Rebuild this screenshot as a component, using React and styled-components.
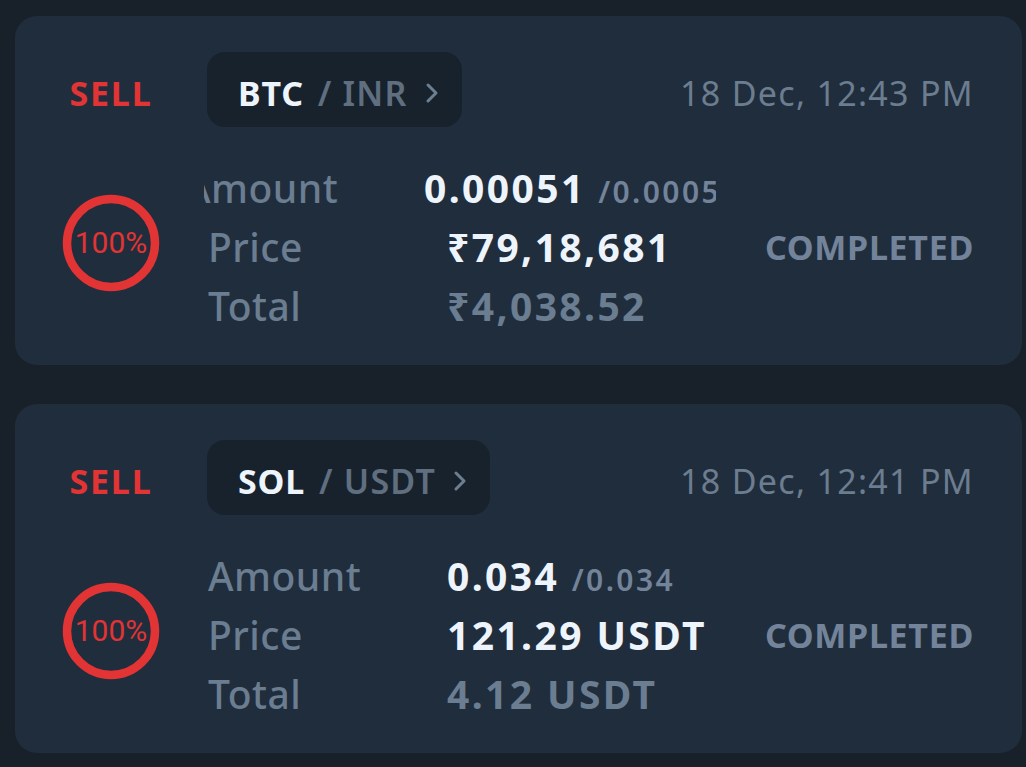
import styled, { createGlobalStyle } from "styled-components";

const GlobalStyle = createGlobalStyle`
  html, body {
    margin: 0;
    padding: 0;
    background: #18202a;
  }
  body {
    font-family: "Noto Sans", "Open Sans", sans-serif;
    overflow: hidden;
  }
`;

const orders = [
  {
    side: "SELL",
    base: "BTC",
    quote: "INR",
    time: "18 Dec, 12:43 PM",
    amount: "0.00051",
    filled: "/0.0005",
    price: "₹79,18,681",
    total: "₹4,038.52",
    status: "COMPLETED",
    shift: 23,
  },
  {
    side: "SELL",
    base: "SOL",
    quote: "USDT",
    time: "18 Dec, 12:41 PM",
    amount: "0.034",
    filled: "/0.034",
    price: "121.29 USDT",
    total: "4.12 USDT",
    status: "COMPLETED",
    shift: 0,
  },
];

const Ring = () => (
  <RingBox>
    <svg width="98" height="98" viewBox="0 0 98 98">
      <circle cx="49" cy="49" r="44" fill="none" stroke="#e23434" strokeWidth="8.5" />
    </svg>
    <RingText>100%</RingText>
  </RingBox>
);

const Chevron = () => (
  <svg width="16" height="22" viewBox="0 0 16 22">
    <path d="M4 3 L12 11 L4 19" fill="none" stroke="#6e7f91" strokeWidth="3" strokeLinecap="round" strokeLinejoin="round" />
  </svg>
);

const OrderCard = ({ order }) => (
  <Card>
    <Side>{order.side}</Side>
    <Header>
      <Pair>
        <Base>{order.base}</Base>
        <Quote>/ {order.quote}</Quote>
        <Chevron />
      </Pair>
      <Time>{order.time}</Time>
    </Header>
    <RingCell>
      <Ring />
    </RingCell>
    <Body>
      <Rows>
        <ClipRow>
          <Row style={{ marginLeft: -order.shift }}>
            <Label>Amount</Label>
            <Value>
              {order.amount} <Filled>{order.filled}</Filled>
            </Value>
          </Row>
        </ClipRow>
        <Row>
          <Label>Price</Label>
          <Value>{order.price}</Value>
        </Row>
        <Row>
          <Label>Total</Label>
          <Value $muted>{order.total}</Value>
        </Row>
      </Rows>
      <Status>{order.status}</Status>
    </Body>
  </Card>
);

const App = () => (
  <>
    <GlobalStyle />
    <Page>
      {orders.map((o, i) => (
        <OrderCard key={i} order={o} />
      ))}
    </Page>
  </>
);

export default App;

const Page = styled.div`
  padding: 16px 4px 0 15px;
  display: flex;
  flex-direction: column;
  gap: 39px;
`;

const Card = styled.div`
  background: #202d3d;
  border-radius: 22px;
  height: 349px;
  box-sizing: border-box;
  padding: 36px 48px 30px 0;
  display: grid;
  grid-template-columns: 192px 1fr;
  grid-template-rows: 75px 177px;
  row-gap: 31px;
`;

const Side = styled.div`
  display: flex;
  align-items: center;
  justify-content: center;
  padding-top: 7px;
  color: #e23434;
  font-size: 34px;
  font-weight: 700;
  letter-spacing: 1.8px;
`;

const Header = styled.div`
  display: flex;
  align-items: center;
  justify-content: space-between;
`;

const Pair = styled.div`
  display: flex;
  align-items: center;
  gap: 14px;
  height: 75px;
  box-sizing: border-box;
  padding: 7px 22px 0 31px;
  background: #18222d;
  border-radius: 18px;
  font-size: 34px;
`;

const Base = styled.span`
  color: #eef4fb;
  font-weight: 700;
  letter-spacing: 0.8px;
`;

const Quote = styled.span`
  color: #5f6f80;
  font-weight: 600;
  letter-spacing: 1.2px;
  margin-right: 2px;
`;

const Time = styled.div`
  padding-top: 7px;
  color: #6c7d8f;
  font-size: 34px;
  letter-spacing: 1.3px;
`;

const RingCell = styled.div`
  display: flex;
  align-items: center;
  justify-content: center;
  padding-bottom: 8px;
`;

const RingBox = styled.div`
  position: relative;
  width: 98px;
  height: 98px;
  svg {
    display: block;
  }
`;

const RingText = styled.span`
  position: absolute;
  inset: 0;
  display: flex;
  align-items: center;
  justify-content: center;
  color: #e23434;
  font-family: Roboto, sans-serif;
  font-size: 30px;
`;

const Body = styled.div`
  display: flex;
  align-items: center;
  justify-content: space-between;
  margin-left: -3px;
`;

const Rows = styled.div`
  width: 512px;
  display: flex;
  flex-direction: column;
`;

const ClipRow = styled.div`
  overflow: hidden;
`;

const Row = styled.div`
  display: flex;
  align-items: center;
  height: 59px;
  padding-left: 4px;
  white-space: nowrap;
`;

const Label = styled.span`
  flex: 0 0 239px;
  color: #6b7d90;
  font-size: 39px;
  font-weight: 500;
  letter-spacing: 0.5px;
`;

const Value = styled.span`
  color: ${(p) => (p.$muted ? "#6b7d90" : "#eef4fb")};
  font-size: 39px;
  font-weight: 700;
  letter-spacing: 2.4px;
`;

const Filled = styled.span`
  color: #73849a;
  font-size: 30px;
  font-weight: 600;
  letter-spacing: 2.4px;
`;

const Status = styled.div`
  color: #73849a;
  font-size: 34px;
  font-weight: 700;
  letter-spacing: 0.7px;
`;
